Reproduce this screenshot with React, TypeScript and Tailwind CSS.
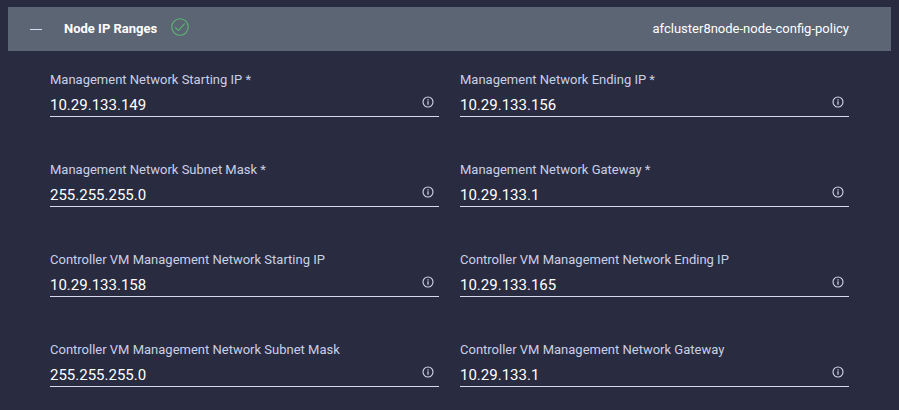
import { useState } from "react";

type Field = { id: string; label: string; value: string; required?: boolean };

const initialFields: Field[] = [
  { id: "mgmt-start", label: "Management Network Starting IP", value: "10.29.133.149", required: true },
  { id: "mgmt-end", label: "Management Network Ending IP", value: "10.29.133.156", required: true },
  { id: "mgmt-mask", label: "Management Network Subnet Mask", value: "255.255.255.0", required: true },
  { id: "mgmt-gateway", label: "Management Network Gateway", value: "10.29.133.1", required: true },
  { id: "cvm-start", label: "Controller VM Management Network Starting IP", value: "10.29.133.158" },
  { id: "cvm-end", label: "Controller VM Management Network Ending IP", value: "10.29.133.165" },
  { id: "cvm-mask", label: "Controller VM Management Network Subnet Mask", value: "255.255.255.0" },
  { id: "cvm-gateway", label: "Controller VM Management Network Gateway", value: "10.29.133.1" },
];

function CheckIcon() {
  return (
    <svg viewBox="0 0 18 18" className="size-[18px]" fill="none" stroke="#5cb874" strokeWidth="1.1" aria-hidden="true">
      <circle cx="9" cy="9" r="8.2" />
      <path d="M4.2 9.4 7.4 12.5 13.6 5.6" />
    </svg>
  );
}

function InfoIcon() {
  return (
    <svg viewBox="0 0 12 12" className="size-3" fill="none" stroke="#d3d8ea" strokeWidth="1.1" aria-hidden="true">
      <circle cx="6" cy="6" r="5" />
      <path d="M6 5.3V8.7M6 3.2V4.4" strokeWidth="1.2" />
    </svg>
  );
}

function IpField({ field, onChange }: { field: Field; onChange: (value: string) => void }) {
  return (
    <div>
      <label htmlFor={field.id} className="block text-[13px] leading-5 text-[#c9d0e6]">
        {field.label}
        {field.required && " *"}
      </label>
      <div className="flex items-center border-b border-[#d5daee] pr-1">
        <input
          id={field.id}
          value={field.value}
          onChange={(e) => onChange(e.target.value)}
          className="h-[26px] min-w-0 flex-1 bg-transparent pt-1 text-[15px] leading-5 text-white outline-none"
        />
        <button type="button" aria-label={`About ${field.label}`} className="px-px pb-0.5">
          <InfoIcon />
        </button>
      </div>
    </div>
  );
}

export default function App() {
  const [open, setOpen] = useState(true);
  const [fields, setFields] = useState(initialFields);

  return (
    <main className="min-h-screen bg-[#292b40] px-2 pt-[7px] font-[Roboto,sans-serif]">
      <header className="flex h-11 items-center bg-[#5b6573] pr-[42px] pl-[22px] text-[13px] text-white">
        <button
          type="button"
          aria-label="Toggle section"
          aria-expanded={open}
          onClick={() => setOpen(!open)}
          className="flex h-5 w-3 items-center"
        >
          <span className="h-px w-full bg-[#d5daee]" />
        </button>
        <h2 className="ml-[22px] font-bold">Node IP Ranges</h2>
        <span className="ml-3.5 pb-1">
          <CheckIcon />
        </span>
        <span className="ml-auto">afcluster8node-node-config-policy</span>
      </header>
      {open && (
        <form className="grid grid-cols-2 gap-x-[21px] gap-y-[43px] px-[42px] pt-[19px]">
          {fields.map((field) => (
            <IpField
              key={field.id}
              field={field}
              onChange={(value) => setFields(fields.map((f) => (f.id === field.id ? { ...f, value } : f)))}
            />
          ))}
        </form>
      )}
    </main>
  );
}
